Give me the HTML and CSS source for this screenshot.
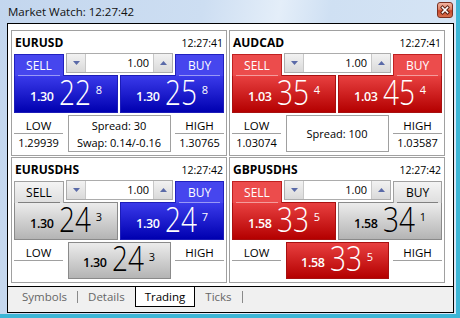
FILE: index.html
```html
<!DOCTYPE html>
<html>
<head>
<meta charset="utf-8">
<title>Market Watch</title>
<link rel="stylesheet" href="styles.css">
</head>
<body>
<div class="window">
  <div class="titlebar">
    <span class="title">Market Watch: 12:27:42</span>
    <div class="close">
      <svg width="14" height="14" viewBox="0 0 14 14"><path d="M4.5 4.5 L9.5 9.5 M9.5 4.5 L4.5 9.5" stroke="#5a2012" stroke-width="3.4" stroke-linecap="square"/><path d="M4.5 4.5 L9.5 9.5 M9.5 4.5 L4.5 9.5" stroke="#ffffff" stroke-width="1.6" stroke-linecap="square"/></svg>
    </div>
  </div>
  <div class="frame">
    <div class="panels">
      <div class="panel">
        <div class="head"><span class="sym">EURUSD</span><span class="time">12:27:41</span></div>
        <div class="trade">
          <div class="tab blue"><span>SELL</span></div>
          <div class="spin"><span class="btn"><svg width="7" height="4" viewBox="0 0 7 4"><path d="M0 0H7L3.5 4Z" fill="#5a6aa8"/></svg></span><span class="lot">1.00</span><span class="btn"><svg width="7" height="4" viewBox="0 0 7 4"><path d="M0 4H7L3.5 0Z" fill="#5a6aa8"/></svg></span></div>
          <div class="tab blue"><span>BUY</span></div>
        </div>
        <div class="prices">
          <div class="price blue"><span class="small">1.30</span><span class="big">22</span><span class="pip">8</span></div>
          <div class="price blue"><span class="small">1.30</span><span class="big">25</span><span class="pip">8</span></div>
        </div>
        <div class="stats">
          <div class="col"><div class="lbl">LOW</div><div class="val">1.29939</div></div>
          <div class="info"><div>Spread: 30</div><div>Swap: 0.14/-0.16</div></div>
          <div class="col"><div class="lbl">HIGH</div><div class="val">1.30765</div></div>
        </div>
      </div>
      <div class="panel">
        <div class="head"><span class="sym">AUDCAD</span><span class="time">12:27:41</span></div>
        <div class="trade">
          <div class="tab red"><span>SELL</span></div>
          <div class="spin"><span class="btn"><svg width="7" height="4" viewBox="0 0 7 4"><path d="M0 0H7L3.5 4Z" fill="#5a6aa8"/></svg></span><span class="lot">1.00</span><span class="btn"><svg width="7" height="4" viewBox="0 0 7 4"><path d="M0 4H7L3.5 0Z" fill="#5a6aa8"/></svg></span></div>
          <div class="tab red"><span>BUY</span></div>
        </div>
        <div class="prices">
          <div class="price red"><span class="small">1.03</span><span class="big">35</span><span class="pip">4</span></div>
          <div class="price red"><span class="small">1.03</span><span class="big">45</span><span class="pip">4</span></div>
        </div>
        <div class="stats">
          <div class="col"><div class="lbl">LOW</div><div class="val">1.03074</div></div>
          <div class="info"><div>Spread: 100</div></div>
          <div class="col"><div class="lbl">HIGH</div><div class="val">1.03587</div></div>
        </div>
      </div>
      <div class="panel">
        <div class="head"><span class="sym">EURUSDHS</span><span class="time">12:27:42</span></div>
        <div class="trade">
          <div class="tab gray"><span>SELL</span></div>
          <div class="spin"><span class="btn"><svg width="7" height="4" viewBox="0 0 7 4"><path d="M0 0H7L3.5 4Z" fill="#5a6aa8"/></svg></span><span class="lot">1.00</span><span class="btn"><svg width="7" height="4" viewBox="0 0 7 4"><path d="M0 4H7L3.5 0Z" fill="#5a6aa8"/></svg></span></div>
          <div class="tab blue"><span>BUY</span></div>
        </div>
        <div class="prices">
          <div class="price gray"><span class="small">1.30</span><span class="big">24</span><span class="pip">3</span></div>
          <div class="price blue"><span class="small">1.30</span><span class="big">24</span><span class="pip">7</span></div>
        </div>
        <div class="stats">
          <div class="col"><div class="lbl">LOW</div><div class="val"></div></div>
          <div class="info price gray"><span class="small">1.30</span><span class="big">24</span><span class="pip">3</span></div>
          <div class="col"><div class="lbl">HIGH</div><div class="val"></div></div>
        </div>
      </div>
      <div class="panel">
        <div class="head"><span class="sym">GBPUSDHS</span><span class="time">12:27:42</span></div>
        <div class="trade">
          <div class="tab red"><span>SELL</span></div>
          <div class="spin"><span class="btn"><svg width="7" height="4" viewBox="0 0 7 4"><path d="M0 0H7L3.5 4Z" fill="#5a6aa8"/></svg></span><span class="lot">1.00</span><span class="btn"><svg width="7" height="4" viewBox="0 0 7 4"><path d="M0 4H7L3.5 0Z" fill="#5a6aa8"/></svg></span></div>
          <div class="tab gray"><span>BUY</span></div>
        </div>
        <div class="prices">
          <div class="price red"><span class="small">1.58</span><span class="big">33</span><span class="pip">5</span></div>
          <div class="price gray"><span class="small">1.58</span><span class="big">34</span><span class="pip">1</span></div>
        </div>
        <div class="stats">
          <div class="col"><div class="lbl">LOW</div><div class="val"></div></div>
          <div class="info price red"><span class="small">1.58</span><span class="big">33</span><span class="pip">5</span></div>
          <div class="col"><div class="lbl">HIGH</div><div class="val"></div></div>
        </div>
      </div>
    </div>
    <div class="tabs">
      <span class="t">Symbols</span><span class="sep"></span><span class="t">Details</span><span class="t active">Trading</span><span class="t">Ticks</span><span class="sep"></span>
    </div>
  </div>
</div>
</body>
</html>
```

FILE: styles.css
```css
* { box-sizing: border-box; }
html, body { margin: 0; padding: 0; }
body {
  width: 460px; height: 318px; overflow: hidden;
  font-family: "Open Sans", "Noto Sans", sans-serif;
  color: #000;
}
.window {
  width: 460px; height: 318px;
  background: linear-gradient(100deg, #c3d6ee 0%, #cddef2 40%, #e4eef9 55%, #cfe0f3 65%, #d8e6f5 100%);
  border-right: 4px solid #3db6d6;
  border-bottom: 4px solid #3db6d6;
  display: flex; flex-direction: column;
}
.titlebar {
  height: 23px; display: flex; align-items: center; justify-content: space-between;
  padding: 0 3px 0 8px;
}
.title { font-size: 11.5px; color: #111; }
.close {
  width: 16px; height: 16px; margin-top: -3px;
  border: 1px solid #7a3020; border-radius: 3px;
  background: linear-gradient(#f0b3a0 0%, #e08468 45%, #c8462a 55%, #d8704e 100%);
  display: flex; align-items: center; justify-content: center;
}
.frame {
  margin-left: 7px; width: 447px; height: 290px;
  border: 1px solid #000; background: #fff;
  display: flex; flex-direction: column;
}
.panels {
  height: 262px;
  padding: 6px 0 0 3px;
  display: grid;
  grid-template-columns: 216px 216px;
  grid-template-rows: 126px 126px;
  column-gap: 2px; row-gap: 1px;
  align-content: start;
}
.panel {
  border: 1px solid #a0a0a0;
  padding: 0 2px 3px;
  display: flex; flex-direction: column;
}
.head {
  height: 23px; display: flex; align-items: center; justify-content: space-between;
  padding: 0 1px 0 1px;
}
.sym { font-weight: 700; font-size: 12px; }
.time { font-size: 10.5px; }
.trade { height: 21px; display: flex; gap: 2px; }
.tab {
  width: 50px; height: 22px; padding: 0 3px;
  position: relative; z-index: 1; margin-bottom: -1px;
  font-size: 12px; color: #fff;
}
.tab span {
  display: flex; height: 100%; align-items: center; justify-content: center;
  border-bottom: 1px solid rgba(255,255,255,0.45);
  padding-top: 1px;
}
.tab.blue { background: #4646ee; border: 1px solid #2020c0; border-bottom: 0; }
.tab.red { background: #ec4c4c; border: 1px solid #c02020; border-bottom: 0; }
.tab.gray { background: linear-gradient(#f4f4f4, #dedede); border: 1px solid #a0a0a0; border-bottom: 0; color: #000; }
.tab.gray span { border-bottom-color: #808080; }
.trade .tab:last-child { width: 49px; }
.spin {
  width: 107px; height: 20px; margin-top: -1px;
  border: 1px solid #acacac; display: flex; background: #fff;
}
.btn {
  width: 19px; display: flex; align-items: center; justify-content: center;
  background: linear-gradient(#f2f2f2, #d9d9d9);
}
.btn:first-child { border-right: 1px solid #c8c8c8; }
.btn:last-child { border-left: 1px solid #c8c8c8; }
.lot { flex: 1; text-align: right; font-size: 11px; line-height: 18px; padding-right: 4px; }
.prices { height: 38px; display: flex; gap: 2px; }
.price {
  flex: 1; display: flex; align-items: flex-end; justify-content: center;
  color: #fff; padding-bottom: 2px;
}
.price.blue { background: linear-gradient(#3a3aea, #0000b0); border: 1px solid #1c1cb8; }
.price.red { background: linear-gradient(#e84040, #b40000); border: 1px solid #a81010; }
.price.gray { background: linear-gradient(#ececec, #b4b4b4); border: 1px solid #8a8a8a; color: #000; }
.small { font-size: 12.5px; font-weight: 600; margin-right: 5px; margin-bottom: 5px; letter-spacing: -0.3px; }
.big {
  display: inline-block; font-size: 35px; font-weight: 300; line-height: 36px;
  transform: scaleX(0.8); margin: 0 -4px;
}
.pip { font-size: 11px; align-self: flex-start; margin-top: 6px; margin-left: 5px; }
.stats { height: 37px; margin-top: 2px; display: flex; justify-content: space-between; }
.col { width: 49px; display: flex; flex-direction: column; font-size: 11px; }
.lbl { height: 19px; border-bottom: 1px solid #a0a0a0; text-align: center; line-height: 19px; padding-top: 1px; font-size: 11.5px; }
.val { flex: 1; text-align: center; line-height: 17px; }
.info {
  width: 103px; border: 1px solid #a0a0a0; font-size: 11px;
  display: flex; flex-direction: column; justify-content: center; align-items: center; gap: 2px;
}
.info.price { flex: none; flex-direction: row; align-items: flex-end; justify-content: center; gap: 0; }
.tabs {
  flex: 1; border-top: 1px solid #000; background: #f0f0f0;
  display: flex; align-items: flex-start; padding-left: 4px;
  font-size: 11.5px; color: #666;
}
.t { padding: 0 10px; height: 20px; line-height: 20px; }
.t.active {
  background: #fff; color: #000; border: 1px solid #000; border-top: 0;
  padding: 0 9px;
}
.sep { width: 1px; height: 12px; margin-top: 4px; background: #8a8a8a; }
```
